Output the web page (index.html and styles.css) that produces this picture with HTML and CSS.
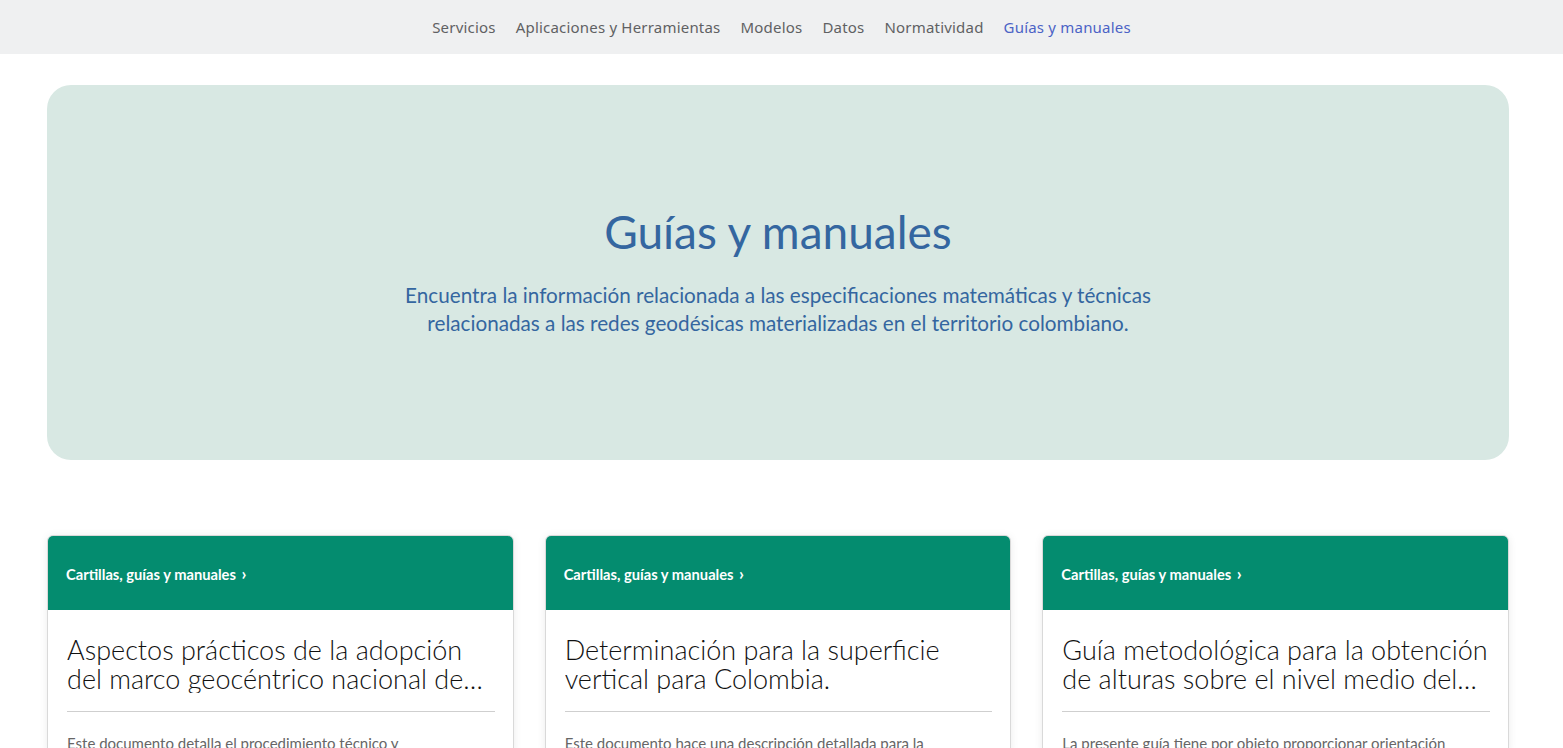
FILE: index.html
```html
<!DOCTYPE html>
<html lang="es">
<head>
<meta charset="utf-8">
<title>Guías y manuales</title>
<link rel="stylesheet" href="styles.css">
</head>
<body>
<nav class="topnav">
  <a href="#" class="nav-link">Servicios</a>
  <a href="#" class="nav-link">Aplicaciones y Herramientas</a>
  <a href="#" class="nav-link">Modelos</a>
  <a href="#" class="nav-link">Datos</a>
  <a href="#" class="nav-link">Normatividad</a>
  <a href="#" class="nav-link active">Guías y manuales</a>
</nav>
<main class="page">
  <section class="hero">
    <h1 class="hero-title">Guías y manuales</h1>
    <p class="hero-text">Encuentra la información relacionada a las especificaciones matemáticas y técnicas<br>relacionadas a las redes geodésicas materializadas en el territorio colombiano.</p>
  </section>
  <section class="cards">
    <article class="card">
      <header class="card-head"><a href="#" class="card-cat">Cartillas, guías y manuales <span class="chev">›</span></a></header>
      <div class="card-body">
        <h2 class="card-title">Aspectos prácticos de la adopción del marco geocéntrico nacional de referencia MAGNA-SIRGAS como datum oficial de Colombia</h2>
        <hr class="card-rule">
        <p class="card-text">Este documento detalla el procedimiento técnico y</p>
      </div>
    </article>
    <article class="card">
      <header class="card-head"><a href="#" class="card-cat">Cartillas, guías y manuales <span class="chev">›</span></a></header>
      <div class="card-body">
        <h2 class="card-title">Determinación para la superficie vertical para Colombia.</h2>
        <hr class="card-rule">
        <p class="card-text">Este documento hace una descripción detallada para la</p>
      </div>
    </article>
    <article class="card">
      <header class="card-head"><a href="#" class="card-cat">Cartillas, guías y manuales <span class="chev">›</span></a></header>
      <div class="card-body">
        <h2 class="card-title">Guía metodológica para la obtención de alturas sobre el nivel medio del mar utilizando el sistema GPS</h2>
        <hr class="card-rule">
        <p class="card-text">La presente guía tiene por objeto proporcionar orientación</p>
      </div>
    </article>
  </section>
</main>
</body>
</html>
```
FILE: styles.css
```css
* { box-sizing: border-box; }
html, body { margin: 0; padding: 0; background: #ffffff; }
body { font-family: "Lato", "Open Sans", sans-serif; overflow: hidden; }

.topnav {
  height: 54px;
  background: #eff0f1;
  display: flex;
  justify-content: center;
  align-items: center;
  gap: 20px;
}
.nav-link {
  font-family: "Noto Sans", "Open Sans", sans-serif;
  font-size: 15px;
  color: #5f6163;
  text-decoration: none;
  letter-spacing: 0.2px;
}
.nav-link.active { color: #4b63c6; }

.page {
  width: 1462px;
  margin: 31px 0 0 47px;
}

.hero {
  height: 375px;
  background: #d8e8e3;
  border-radius: 24px;
  display: flex;
  flex-direction: column;
  align-items: center;
  justify-content: center;
  text-align: center;
  padding-bottom: 4px;
}
.hero-title {
  margin: 0 0 21px;
  font-size: 46px;
  font-weight: 400;
  color: #3466a0;
  line-height: 56px;
}
.hero-text {
  margin: 0;
  font-size: 20.7px;
  line-height: 28px;
  color: #3466a0;
}

.cards {
  margin-top: 75px;
  display: grid;
  grid-template-columns: repeat(3, 1fr);
  gap: 31px;
}
.card {
  border: 1px solid #d9d9d9;
  border-radius: 6px;
  overflow: hidden;
  background: #fff;
  box-shadow: 0 1px 8px rgba(0,0,0,0.08);
}
.card-head {
  height: 75px;
  background: #048c6f;
  display: flex;
  align-items: center;
  padding: 2px 19px 0;
  margin: -1px -1px 0;
}
.card-cat {
  color: #fff;
  text-decoration: none;
  font-size: 14.7px;
  font-weight: 700;
}
.chev { margin-left: 2px; font-size: 17px; }
.card-body { padding: 25px 14px 0 19px; }
.card-title {
  margin: 0;
  font-size: 27px;
  font-weight: 300;
  line-height: 29px;
  color: #111;
  display: -webkit-box;
  -webkit-line-clamp: 2;
  -webkit-box-orient: vertical;
  overflow: hidden;
}
.card-rule {
  border: 0;
  border-top: 1px solid #cfcfcf;
  margin: 18px 4px 20px 0;
}
.card-text {
  margin: 0;
  font-size: 15px;
  line-height: 22px;
  color: #666;
}
```
